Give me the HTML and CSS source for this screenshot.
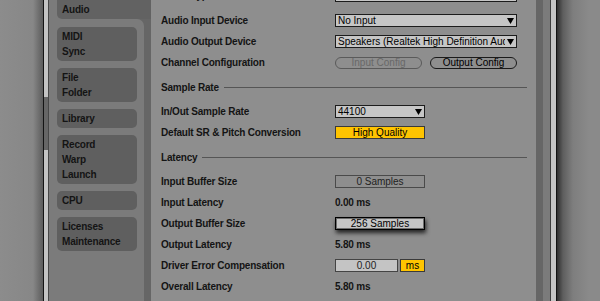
FILE: index.html
```html
<!DOCTYPE html>
<html lang="en">
<head>
    <meta charset="UTF-8">
    <meta name="viewport" content="width=device-width, initial-scale=1.0">
    <title>Preferences - Audio</title>
    <link rel="stylesheet" href="styles.css">
</head>
<body>

<div class="outer-left"></div>
<div class="frame frame-left"></div>

<nav class="sidebar">
    <div class="nav-top">
        <div class="tab tab-active">Audio</div>
    </div>
    <div class="nav-list">
        <div class="tab">MIDI<br>Sync</div>
        <div class="tab">File<br>Folder</div>
        <div class="tab">Library</div>
        <div class="tab">Record<br>Warp<br>Launch</div>
        <div class="tab">CPU</div>
        <div class="tab">Licenses<br>Maintenance</div>
    </div>
</nav>

<main class="panel">
    <div class="row row-cut">
        <span class="label">Driver Type</span>
        <div class="select wide"><span>MME/DirectX</span><svg width="7" height="6" viewBox="0 0 7 6"><polygon points="0,0 7,0 3.5,6"/></svg></div>
    </div>
    <div class="row">
        <span class="label">Audio Input Device</span>
        <div class="select wide"><span>No Input</span><svg width="7" height="6" viewBox="0 0 7 6"><polygon points="0,0 7,0 3.5,6"/></svg></div>
    </div>
    <div class="row">
        <span class="label">Audio Output Device</span>
        <div class="select wide"><span>Speakers (Realtek High Definition Audio)</span><svg width="7" height="6" viewBox="0 0 7 6"><polygon points="0,0 7,0 3.5,6"/></svg></div>
    </div>
    <div class="row">
        <span class="label">Channel Configuration</span>
        <div class="pills">
            <div class="pill pill-off">Input Config</div>
            <div class="pill">Output Config</div>
        </div>
    </div>

    <div class="section"><span>Sample Rate</span><i class="rule"></i></div>

    <div class="row">
        <span class="label">In/Out Sample Rate</span>
        <div class="select narrow"><span>44100</span><svg width="7" height="6" viewBox="0 0 7 6"><polygon points="0,0 7,0 3.5,6"/></svg></div>
    </div>
    <div class="row">
        <span class="label">Default SR &amp; Pitch Conversion</span>
        <div class="field yellow">High Quality</div>
    </div>

    <div class="section"><span>Latency</span><i class="rule"></i></div>

    <div class="row">
        <span class="label">Input Buffer Size</span>
        <div class="field field-flat">0 Samples</div>
    </div>
    <div class="row">
        <span class="label">Input Latency</span>
        <span class="value">0.00 ms</span>
    </div>
    <div class="row">
        <span class="label">Output Buffer Size</span>
        <div class="field field-active">256 Samples</div>
    </div>
    <div class="row">
        <span class="label">Output Latency</span>
        <span class="value">5.80 ms</span>
    </div>
    <div class="row">
        <span class="label">Driver Error Compensation</span>
        <div class="combo">
            <div class="field field-num">0.00</div>
            <div class="field yellow unit">ms</div>
        </div>
    </div>
    <div class="row">
        <span class="label">Overall Latency</span>
        <span class="value">5.80 ms</span>
    </div>
</main>

<div class="edge edge-dark"></div>
<div class="edge edge-mid"></div>
<div class="frame frame-right"></div>
<div class="outer-right"></div>

</body>
</html>
```

FILE: styles.css
```css
body {
    margin: 0;
    height: 301px;
    overflow: hidden;
    display: flex;
    background-color: #8a8a8a;
    font-family: 'Liberation Sans', Arial, sans-serif;
    font-size: 10px;
    letter-spacing: -0.2px;
    color: #141414;
}

/* window surroundings */
.outer-left {
    width: 43px;
    flex: none;
    background: linear-gradient(to right, #8c8c8c 0, #878787 33px, #5c5c5c 43px);
}

.outer-right {
    flex: 1;
    background: linear-gradient(to right, #2e2e2e 0, #5e5e5e 6px, #7e7e7e 16px, #8a8a8a 32px);
}

.frame {
    width: 4px;
    flex: none;
    background-color: #c4c4c4;
}

.frame-left {
    border-left: 1px solid #141414;
    border-right: 1px solid #474747;
    background: linear-gradient(to bottom, #c4c4c4 97px, #666 97px, #666 150px, #c4c4c4 150px);
}

.frame-right {
    width: 5px;
    border-left: 1px solid #3c3c3c;
    border-right: 1px solid #111;
}

.edge {
    width: 7px;
    flex: none;
}

.edge-dark {
    background-color: #666;
}

.edge-mid {
    background-color: #7b7b7b;
}

/* sidebar */
.sidebar {
    width: 102px;
    flex: none;
    display: flex;
    flex-direction: column;
    background-color: #666;
    font-weight: bold;
}

.nav-top {
    background-color: #7b7b7b;
    padding-left: 8px;
}

.tab {
    background-color: #5f5f5f;
    border-radius: 5px;
    padding: 2px 5px;
    line-height: 15px;
}

.tab-active {
    background-color: #626262;
    border-radius: 0 0 0 5px;
}

.nav-list {
    flex: 1;
    display: flex;
    flex-direction: column;
    gap: 7px;
    margin-right: 7px;
    padding: 8px 7px 0 8px;
    background-color: #7b7b7b;
    border-top-right-radius: 7px;
}

/* main panel */
.panel {
    width: 385px;
    flex: none;
    box-sizing: border-box;
    padding: 0 9px 0 10px;
    background-color: #8e8e8e;
}

.row {
    height: 21px;
    display: flex;
    align-items: center;
}

.row-cut {
    height: 24px;
    margin-top: -14px;
    padding-top: 3px;
    box-sizing: border-box;
    align-items: flex-start;
}

.label {
    width: 174px;
    flex: none;
    font-weight: bold;
    line-height: 13px;
}

.value {
    font-weight: bold;
}

.section {
    height: 28px;
    display: flex;
    align-items: center;
    gap: 5px;
    font-weight: bold;
}

.rule {
    flex: 1;
    height: 1px;
    background-color: #555;
}

/* controls */
.select,
.pill,
.field {
    letter-spacing: 0;
}

.select {
    height: 13px;
    box-sizing: border-box;
    display: flex;
    align-items: center;
    gap: 2px;
    padding: 0 2px;
    border: 1px solid #1c1c1c;
    background-color: #c6c6c6;
    color: #000;
    white-space: nowrap;
}

.select span {
    flex: 1;
    min-width: 0;
    overflow: hidden;
    line-height: 11px;
}

.select svg {
    flex: none;
    fill: #000;
}

.wide {
    width: 182px;
}

.narrow {
    width: 90px;
}

.pills {
    display: flex;
    gap: 8px;
}

.pill {
    width: 87px;
    height: 12px;
    box-sizing: border-box;
    border: 1px solid #1a1a1a;
    border-radius: 6px;
    text-align: center;
    line-height: 10px;
    color: #000;
}

.pill-off {
    border-color: #5a5a5a;
    color: #686868;
}

.field {
    width: 90px;
    height: 13px;
    box-sizing: border-box;
    border: 1px solid #444;
    text-align: center;
    line-height: 11px;
    color: #000;
}

.field-flat {
    border-color: #4a4a4a;
    color: #222;
}

.field-active {
    background-color: #c6c6c6;
    border-color: #000;
    box-shadow: inset 0 0 0 1px rgba(0, 0, 0, 0.45), 1px 3px 4px rgba(0, 0, 0, 0.75);
}

.yellow {
    background-color: #ffc400;
    border-color: #3a3a3a;
}

.combo {
    display: flex;
    gap: 2px;
}

.field-num {
    width: 63px;
    background-color: #c4c4c4;
    color: #222;
}

.unit {
    width: 25px;
}
```
